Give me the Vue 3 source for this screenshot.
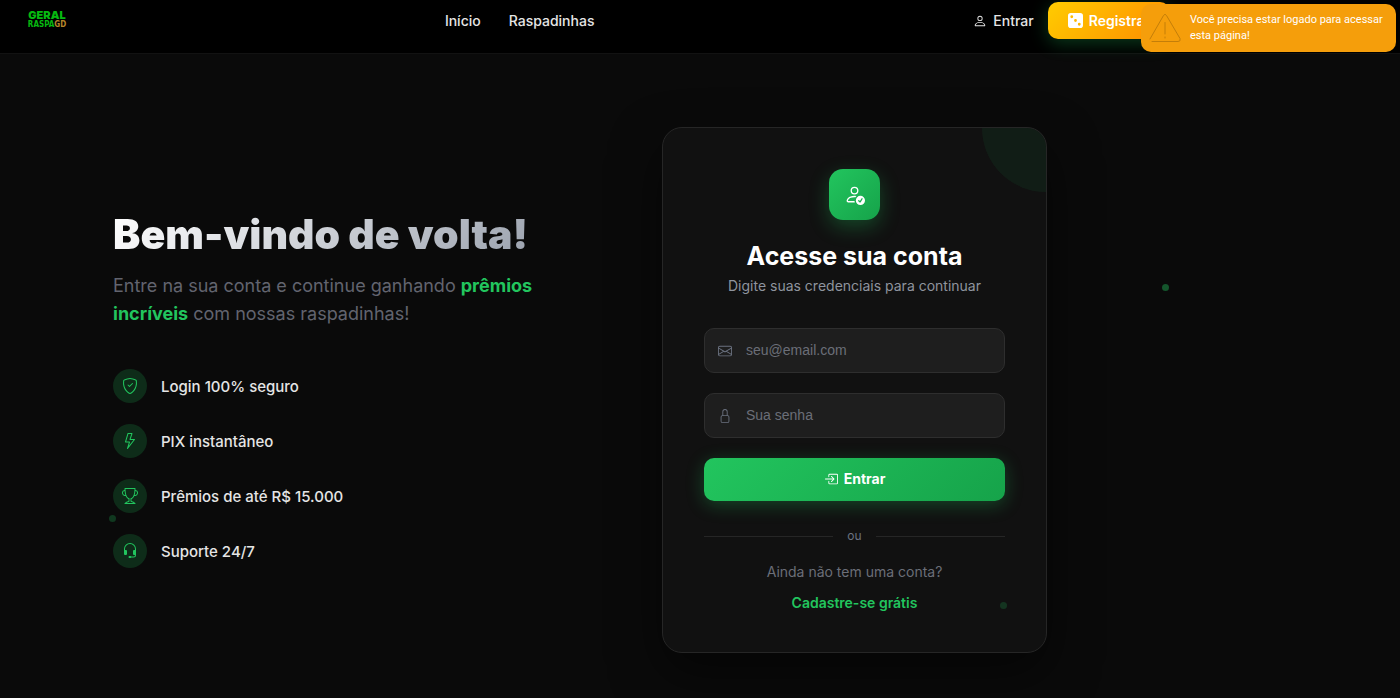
<script setup>
import { ref } from 'vue'

const email = ref('')
const password = ref('')

const icons = {
  person: [
    'M8 8a3 3 0 1 0 0-6 3 3 0 0 0 0 6m2-3a2 2 0 1 1-4 0 2 2 0 0 1 4 0m4 8c0 1-1 1-1 1H3s-1 0-1-1 1-4 6-4 6 3 6 4m-1-.004c-.001-.246-.154-.986-.832-1.664C11.516 10.68 10.289 10 8 10s-3.516.68-4.168 1.332c-.678.678-.83 1.418-.832 1.664z'
  ],
  dice: [
    'M3 0a3 3 0 0 0-3 3v10a3 3 0 0 0 3 3h10a3 3 0 0 0 3-3V3a3 3 0 0 0-3-3zm2.5 4a1.5 1.5 0 1 1-3 0 1.5 1.5 0 0 1 3 0m8 8a1.5 1.5 0 1 1-3 0 1.5 1.5 0 0 1 3 0M8 9.5a1.5 1.5 0 1 1 0-3 1.5 1.5 0 0 1 0 3'
  ],
  personCheck: [
    'M12.5 16a3.5 3.5 0 1 0 0-7 3.5 3.5 0 0 0 0 7m1.679-4.493-1.335 2.226a.75.75 0 0 1-1.174.144l-.774-.773a.5.5 0 0 1 .708-.708l.547.548 1.17-1.951a.5.5 0 1 1 .858.514M11 5a3 3 0 1 1-6 0 3 3 0 0 1 6 0M8 7a2 2 0 1 0 0-4 2 2 0 0 0 0 4',
    'M8.256 14a4.5 4.5 0 0 1-.229-1.004H3c.001-.246.154-.986.832-1.664C4.484 10.68 5.711 10 8 10q.39 0 .74.025c.226-.341.496-.65.804-.918Q8.844 9.002 8 9c-5 0-6 3-6 4s1 1 1 1z'
  ],
  shield: [
    'M5.338 1.59a61 61 0 0 0-2.837.856.48.48 0 0 0-.328.39c-.554 4.157.726 7.19 2.253 9.188a10.7 10.7 0 0 0 2.287 2.233c.346.244.652.42.893.533q.18.085.293.118a1 1 0 0 0 .101.025 1 1 0 0 0 .1-.025q.114-.034.294-.118c.24-.113.547-.29.893-.533a10.7 10.7 0 0 0 2.287-2.233c1.527-1.997 2.807-5.031 2.253-9.188a.48.48 0 0 0-.328-.39c-.651-.213-1.75-.56-2.837-.855C9.552 1.29 8.531 1.067 8 1.067c-.53 0-1.552.223-2.662.524zM5.072.56C6.157.265 7.31 0 8 0s1.843.265 2.928.56c1.11.3 2.229.655 2.887.87a1.54 1.54 0 0 1 1.044 1.262c.596 4.477-.787 7.795-2.465 9.99a11.8 11.8 0 0 1-2.517 2.453 7 7 0 0 1-1.048.625c-.28.132-.581.24-.829.24s-.548-.108-.829-.24a7 7 0 0 1-1.048-.625 11.8 11.8 0 0 1-2.517-2.453C1.928 10.487.545 7.169 1.141 2.692A1.54 1.54 0 0 1 2.185 1.43 63 63 0 0 1 5.072.56',
    'M10.854 5.146a.5.5 0 0 1 0 .708l-3 3a.5.5 0 0 1-.708 0l-1.5-1.5a.5.5 0 1 1 .708-.708L7.5 7.793l2.646-2.647a.5.5 0 0 1 .708 0'
  ],
  lightning: [
    'M5.52.359A.5.5 0 0 1 6 0h4a.5.5 0 0 1 .474.658L8.694 6H12.5a.5.5 0 0 1 .395.807l-7 9a.5.5 0 0 1-.873-.454L6.823 9.5H3.5a.5.5 0 0 1-.48-.641zM6.374 1 4.168 8.5H7.5a.5.5 0 0 1 .478.647L6.78 13.04 11.478 7H8a.5.5 0 0 1-.474-.658L9.306 1z'
  ],
  trophy: [
    'M2.5.5A.5.5 0 0 1 3 0h10a.5.5 0 0 1 .5.5q0 .807-.034 1.536a3 3 0 1 1-1.133 5.89c-.79 1.865-1.878 2.777-2.833 3.011v2.173l1.425.356c.194.048.377.135.537.255L13.3 15.1a.5.5 0 0 1-.3.9H3a.5.5 0 0 1-.3-.9l1.838-1.379c.16-.12.343-.207.537-.255L6.5 13.11v-2.173c-.955-.234-2.043-1.146-2.833-3.012a3 3 0 1 1-1.132-5.89A33 33 0 0 1 2.5.5m.099 2.54a2 2 0 0 0 .72 3.935c-.333-1.05-.588-2.346-.72-3.935m10.083 3.935a2 2 0 0 0 .72-3.935c-.133 1.59-.388 2.885-.72 3.935M3.504 1q.01.775.056 1.469c.13 2.028.457 3.546.87 4.667C5.294 9.48 6.484 10 7 10a.5.5 0 0 1 .5.5v2.61a1 1 0 0 1-.757.97l-1.426.356a.5.5 0 0 0-.179.085L4.5 15h7l-.638-.479a.5.5 0 0 0-.18-.085l-1.425-.356a1 1 0 0 1-.757-.97V10.5A.5.5 0 0 1 9 10c.516 0 1.706-.52 2.57-2.864.413-1.12.74-2.64.87-4.667q.045-.694.056-1.469z'
  ],
  headset: [
    'M8 1a5 5 0 0 0-5 5v1h1a1 1 0 0 1 1 1v3a1 1 0 0 1-1 1H3a1 1 0 0 1-1-1V6a6 6 0 1 1 12 0v6a2.5 2.5 0 0 1-2.5 2.5H9.366a1 1 0 0 1-.866.5h-1a1 1 0 1 1 0-2h1a1 1 0 0 1 .866.5H11.5A1.5 1.5 0 0 0 13 12h-1a1 1 0 0 1-1-1V8a1 1 0 0 1 1-1h1V6a5 5 0 0 0-5-5'
  ],
  envelope: [
    'M0 4a2 2 0 0 1 2-2h12a2 2 0 0 1 2 2v8a2 2 0 0 1-2 2H2a2 2 0 0 1-2-2zm2-1a1 1 0 0 0-1 1v.217l7 4.2 7-4.2V4a1 1 0 0 0-1-1zm13 2.383-4.708 2.825L15 11.105zm-.034 6.876-5.64-3.471L8 9.583l-1.326-.795-5.64 3.47A1 1 0 0 0 2 13h12a1 1 0 0 0 .966-.741M1 11.105l4.708-2.897L1 5.383z'
  ],
  lock: [
    'M8 1a2 2 0 0 1 2 2v4H6V3a2 2 0 0 1 2-2m3 6V3a3 3 0 0 0-6 0v4a2 2 0 0 0-2 2v5a2 2 0 0 0 2 2h6a2 2 0 0 0 2-2V9a2 2 0 0 0-2-2M5 8h6a1 1 0 0 1 1 1v5a1 1 0 0 1-1 1H5a1 1 0 0 1-1-1V9a1 1 0 0 1 1-1'
  ],
  enter: [
    'M6 3.5a.5.5 0 0 1 .5-.5h8a.5.5 0 0 1 .5.5v9a.5.5 0 0 1-.5.5h-8a.5.5 0 0 1-.5-.5v-2a.5.5 0 0 0-1 0v2A1.5 1.5 0 0 0 6.5 14h8a1.5 1.5 0 0 0 1.5-1.5v-9A1.5 1.5 0 0 0 14.5 2h-8A1.5 1.5 0 0 0 5 3.5v2a.5.5 0 0 0 1 0z',
    'M11.854 8.354a.5.5 0 0 0 0-.708l-3-3a.5.5 0 1 0-.708.708L10.293 7.5H1.5a.5.5 0 0 0 0 1h8.793l-2.147 2.146a.5.5 0 0 0 .708.708z'
  ]
}

const features = [
  { icon: icons.shield, label: 'Login 100% seguro' },
  { icon: icons.lightning, label: 'PIX instantâneo' },
  { icon: icons.trophy, label: 'Prêmios de até R$ 15.000' },
  { icon: icons.headset, label: 'Suporte 24/7' }
]
</script>

<template>
  <div class="page">
    <header class="header">
      <div class="header-inner">
        <a class="logo" href="#">
          <span class="logo-top">GERAL</span>
          <span class="logo-bottom">RASPA<b>GD</b></span>
        </a>
        <nav class="nav">
          <a href="#">Início</a>
          <a href="#">Raspadinhas</a>
        </nav>
        <div class="actions">
          <a class="login" href="#">
            <svg class="icon-sm" viewBox="0 0 16 16"><path v-for="d in icons.person" :key="d" :d="d" /></svg>
            Entrar
          </a>
          <a class="register" href="#">
            <svg class="icon-md" viewBox="0 0 16 16"><path v-for="d in icons.dice" :key="d" :d="d" /></svg>
            Registrar
          </a>
        </div>
      </div>
    </header>

    <main class="hero">
      <i class="dot dot-a"></i>
      <i class="dot dot-b"></i>
      <section class="intro">
        <h1>Bem-vindo de volta!</h1>
        <p class="lead">
          Entre na sua conta e continue ganhando <strong>prêmios incríveis</strong> com nossas raspadinhas!
        </p>
        <ul class="features">
          <li v-for="f in features" :key="f.label">
            <span class="badge">
              <svg class="icon-lg" viewBox="0 0 16 16"><path v-for="d in f.icon" :key="d" :d="d" /></svg>
            </span>
            {{ f.label }}
          </li>
        </ul>
      </section>

      <section class="card">
        <i class="dot dot-c"></i>
        <div class="card-head">
          <span class="card-icon">
            <svg viewBox="0 0 16 16"><path v-for="d in icons.personCheck" :key="d" :d="d" /></svg>
          </span>
          <h2>Acesse sua conta</h2>
          <p>Digite suas credenciais para continuar</p>
        </div>
        <form class="form" @submit.prevent>
          <label class="field">
            <svg class="icon-sm" viewBox="0 0 16 16"><path v-for="d in icons.envelope" :key="d" :d="d" /></svg>
            <input v-model="email" type="email" placeholder="seu@email.com" aria-label="E-mail" />
          </label>
          <label class="field">
            <svg class="icon-sm" viewBox="0 0 16 16"><path v-for="d in icons.lock" :key="d" :d="d" /></svg>
            <input v-model="password" type="password" placeholder="Sua senha" aria-label="Senha" />
          </label>
          <button class="submit" type="submit">
            <svg class="icon-sm" viewBox="0 0 16 16"><path v-for="d in icons.enter" :key="d" :d="d" /></svg>
            Entrar
          </button>
        </form>
        <div class="divider"><span>ou</span></div>
        <div class="signup">
          <p>Ainda não tem uma conta?</p>
          <a href="#">Cadastre-se grátis</a>
        </div>
      </section>
    </main>

    <div class="toast" role="alert">
      <svg viewBox="0 0 34 34">
        <path d="M2 28 15.500 4.500Q17 2 18.500 4.500L32 27.500Q33 30.500 30 30.500H4M17 11.500v11.500M17 26v1" />
      </svg>
      <span>Você precisa estar logado para acessar esta página!</span>
    </div>
  </div>
</template>

<style>
body {
  margin: 0;
  background: #0a0a0a;
}
</style>

<style scoped>
.page {
  position: relative;
  min-height: 100vh;
  overflow: hidden;
  box-sizing: border-box;
  background: #0a0a0a;
  color: #fff;
  font-family: Inter, "Liberation Sans", sans-serif;
  font-size: 14px;
}
a {
  color: inherit;
  text-decoration: none;
}
h1,
h2,
p,
ul {
  margin: 0;
  padding: 0;
}
svg {
  fill: currentColor;
  flex: none;
}
.icon-sm {
  width: 14px;
  height: 14px;
}
.icon-md {
  width: 15px;
  height: 15px;
}
.icon-lg {
  width: 16px;
  height: 16px;
}

.header {
  background: #000;
  border-bottom: 1px solid #121212;
}
.header-inner {
  display: flex;
  justify-content: space-between;
  align-items: center;
  box-sizing: border-box;
  max-width: 1194px;
  padding: 2px 24px 14px 28px;
}
.logo {
  display: flex;
  flex-direction: column;
  align-items: center;
  width: 38px;
  color: #06b810;
  font-weight: 900;
}
.logo-top {
  font-size: 11px;
  line-height: 9px;
}
.logo-bottom {
  font: bold 8px/10px "DejaVu Sans Condensed", "DejaVu Sans", sans-serif;
}
.logo-bottom b {
  color: #b8862b;
}
.nav {
  display: flex;
  gap: 28px;
  color: #e5e5e5;
  font-weight: 500;
}
.actions {
  display: flex;
  align-items: center;
  gap: 14px;
  font-weight: 500;
}
.login {
  display: flex;
  align-items: center;
  gap: 6px;
  color: #e5e5e5;
}
.register {
  display: flex;
  align-items: center;
  gap: 6px;
  height: 37px;
  padding: 0 20px;
  border-radius: 10px;
  background: linear-gradient(135deg, #ffcc00, #ff8c00);
  box-shadow: 0 4px 18px rgba(34, 197, 94, 0.3);
  font-weight: 600;
}

.hero {
  position: relative;
  display: grid;
  grid-template-columns: 1fr 1fr;
  align-items: center;
  gap: 62px;
  box-sizing: border-box;
  max-width: 1194px;
  padding: 73px 113px 45px;
}
.dot {
  position: absolute;
  width: 7px;
  height: 7px;
  border-radius: 50%;
  background: #22c55e;
}
.dot-a {
  left: 1162px;
  top: 230px;
  opacity: 0.4;
}
.dot-b {
  left: 109px;
  top: 461px;
  opacity: 0.25;
}
.dot-c {
  right: 39px;
  bottom: 43px;
  opacity: 0.2;
}

h1 {
  width: fit-content;
  background: linear-gradient(135deg, #fff, #9ca3af);
  background-clip: text;
  -webkit-background-clip: text;
  color: transparent;
  font-size: 41px;
  font-weight: 900;
  line-height: 45px;
  white-space: nowrap;
}
.lead {
  margin-top: 15px;
  color: #62646f;
  font-size: 18px;
  line-height: 28px;
}
.lead strong {
  color: #22c55e;
  font-weight: 700;
}
.features {
  display: flex;
  flex-direction: column;
  gap: 21px;
  margin-top: 41px;
  list-style: none;
}
.features li {
  display: flex;
  align-items: center;
  gap: 14px;
  color: #e5e5e5;
  font-size: 15px;
  font-weight: 500;
}
.badge {
  display: grid;
  place-items: center;
  width: 34px;
  height: 34px;
  border-radius: 50%;
  background: #0e2c19;
  color: #22c55e;
}

.card {
  position: relative;
  justify-self: center;
  overflow: hidden;
  box-sizing: border-box;
  width: 100%;
  max-width: 385px;
  padding: 41px 41px 37px;
  border: 1px solid #262626;
  border-radius: 20px;
  background: #111;
  box-shadow: 0 20px 50px rgba(0, 0, 0, 0.5);
}
.card::before {
  content: "";
  position: absolute;
  top: -64px;
  right: -64px;
  width: 128px;
  height: 128px;
  border-radius: 50%;
  background: #22c55e;
  opacity: 0.07;
}
.card-head {
  display: flex;
  flex-direction: column;
  align-items: center;
}
.card-icon {
  display: grid;
  place-items: center;
  width: 51px;
  height: 51px;
  border-radius: 14px;
  background: linear-gradient(135deg, #22c55e, #16a34a);
  box-shadow: 0 7px 20px rgba(34, 197, 94, 0.3);
}
.card-icon svg {
  width: 21px;
  height: 21px;
}
h2 {
  margin-top: 20px;
  font-size: 25px;
  font-weight: 700;
  line-height: 32px;
}
.card-head p {
  margin-top: 3px;
  color: #8f949e;
  line-height: 22px;
}
.form {
  display: flex;
  flex-direction: column;
  gap: 20px;
  margin-top: 31px;
}
.field {
  display: flex;
  align-items: center;
  gap: 14px;
  box-sizing: border-box;
  height: 45px;
  padding: 0 13px;
  border: 1px solid #2e2e2e;
  border-radius: 10px;
  background: #1e1e1e;
  color: #6b7280;
}
.field input {
  flex: 1;
  min-width: 0;
  padding: 0 0 2px;
  border: 0;
  outline: 0;
  background: none;
  color: #fff;
  font: 14px "Liberation Sans", Arial, sans-serif;
}
.field input::placeholder {
  color: #6b6e78;
}
.submit {
  display: flex;
  justify-content: center;
  align-items: center;
  gap: 6px;
  height: 43px;
  padding: 0 0 2px;
  border: 0;
  border-radius: 10px;
  background: linear-gradient(135deg, #22c55e, #16a34a);
  box-shadow: 0 4px 18px rgba(34, 197, 94, 0.3);
  color: #fff;
  font: 700 14px Inter, sans-serif;
}
.divider {
  display: flex;
  align-items: center;
  gap: 14px;
  margin-top: 27px;
  color: #6b7280;
  font-size: 12px;
  line-height: 16px;
}
.divider::before,
.divider::after {
  content: "";
  flex: 1;
  height: 1px;
  background: #262626;
}
.signup {
  margin-top: 16px;
  color: #6b6e78;
  text-align: center;
  line-height: 24px;
}
.signup a {
  display: inline-block;
  margin-top: 7px;
  color: #22c55e;
  font-weight: 600;
}

.toast {
  position: absolute;
  top: 4px;
  right: 4px;
  display: flex;
  align-items: center;
  gap: 8px;
  box-sizing: border-box;
  width: 255px;
  height: 48px;
  padding: 0 8px 0 7px;
  border-radius: 10px;
  background: #f59e0b;
  font: 11px/16px Roboto, sans-serif;
}
.toast svg {
  width: 34px;
  height: 34px;
  fill: none;
  stroke: #c47e09;
  stroke-width: 1;
  stroke-linecap: round;
}
</style>
